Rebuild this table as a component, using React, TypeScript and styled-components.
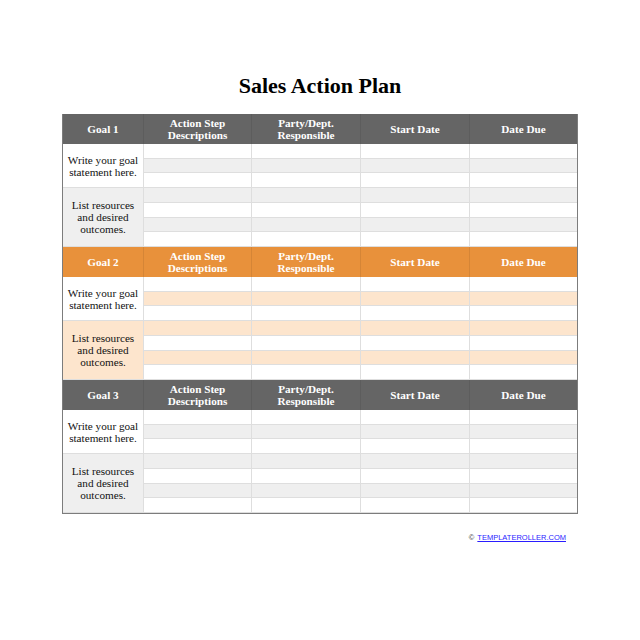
import React from "react";
import styled, { createGlobalStyle } from "styled-components";

const Global = createGlobalStyle`
  html, body { margin: 0; padding: 0; background: #ffffff; }
  body { font-family: "Liberation Serif", "Times New Roman", serif; }
`;

type Theme = { head: string; tint: string };
const GRAY: Theme = { head: "#656565", tint: "#efefef" };
const ORANGE: Theme = { head: "#e8913b", tint: "#fde5cd" };

const Page = styled.div`
  width: 640px;
  height: 640px;
  display: flex;
  flex-direction: column;
  align-items: center;
  padding-top: 73px;
  box-sizing: border-box;
`;

const Title = styled.h1`
  margin: 0 0 15px;
  font-family: "Liberation Serif", "Times New Roman", serif;
  font-weight: 700;
  font-size: 22px;
  line-height: 26px;
  color: #000;
`;

const Table = styled.div`
  width: 516px;
  box-sizing: border-box;
  border: 1px solid #7c7c7c;
  border-top: none;
  display: flex;
  flex-direction: column;
`;

const HeadRow = styled.div<{ $bg: string }>`
  display: grid;
  grid-template-columns: 80px 108px 109px 109px 108px;
  height: 30px;
  background: ${(p) => p.$bg};
`;

const HeadCell = styled.div`
  display: flex;
  align-items: center;
  justify-content: center;
  text-align: center;
  color: #ffffff;
  font-weight: 700;
  font-size: 11.2px;
  line-height: 12.5px;
  border-left: 1px solid rgba(0, 0, 0, 0.08);
  &:first-child { border-left: none; }
`;

const Body = styled.div`
  display: grid;
  grid-template-columns: 80px 108px 109px 109px 108px;
  grid-template-rows: repeat(7, 1fr);
  height: 103px;
`;

const GoalCell = styled.div<{ $bg: string; $start: number; $span: number }>`
  grid-column: 1;
  grid-row: ${(p) => p.$start} / span ${(p) => p.$span};
  background: ${(p) => p.$bg};
  display: flex;
  align-items: center;
  justify-content: center;
  text-align: center;
  font-size: 11.2px;
  line-height: 12px;
  color: #111;
  padding: 0 4px;
  border-bottom: 1px solid #dedede;
  box-sizing: border-box;
`;

const Cell = styled.div<{ $bg: string }>`
  background: ${(p) => p.$bg};
  border-left: 1px solid #dedede;
  border-bottom: 1px solid #dedede;
  box-sizing: border-box;
`;

const Footer = styled.div`
  align-self: stretch;
  display: flex;
  justify-content: flex-end;
  padding-right: 74px;
  margin-top: 19px;
  font-family: "Liberation Sans", Arial, sans-serif;
  font-size: 7.5px;
  line-height: 10px;
  color: #333;
  gap: 3px;
`;

const Link = styled.a`
  color: #2a1dff;
  text-decoration: underline;
`;

const headers = ["Action Step\nDescriptions", "Party/Dept.\nResponsible", "Start Date", "Date Due"];

function Section({ n, theme }: { n: number; theme: Theme }) {
  const rows = Array.from({ length: 7 }, (_, i) => i);
  return (
    <>
      <HeadRow $bg={theme.head}>
        <HeadCell>Goal {n}</HeadCell>
        {headers.map((h) => (
          <HeadCell key={h}>
            <span>
              {h.split("\n").map((l, i) => (
                <React.Fragment key={i}>
                  {i > 0 && <br />}
                  {l}
                </React.Fragment>
              ))}
            </span>
          </HeadCell>
        ))}
      </HeadRow>
      <Body>
        <GoalCell $bg="#ffffff" $start={1} $span={3}>
          Write your goal statement here.
        </GoalCell>
        <GoalCell $bg={theme.tint} $start={4} $span={4}>
          List resources and desired outcomes.
        </GoalCell>
        {rows.map((r) =>
          [0, 1, 2, 3].map((c) => (
            <Cell
              key={`${r}-${c}`}
              $bg={r % 2 === 1 ? theme.tint : "#ffffff"}
              style={{ gridRow: r + 1, gridColumn: c + 2 }}
            />
          ))
        )}
      </Body>
    </>
  );
}

export default function App() {
  return (
    <>
      <Global />
      <Page>
        <Title>Sales Action Plan</Title>
        <Table>
          <Section n={1} theme={GRAY} />
          <Section n={2} theme={ORANGE} />
          <Section n={3} theme={GRAY} />
        </Table>
        <Footer>
          <span>©</span>
          <Link href="#">TEMPLATEROLLER.COM</Link>
        </Footer>
      </Page>
    </>
  );
}
